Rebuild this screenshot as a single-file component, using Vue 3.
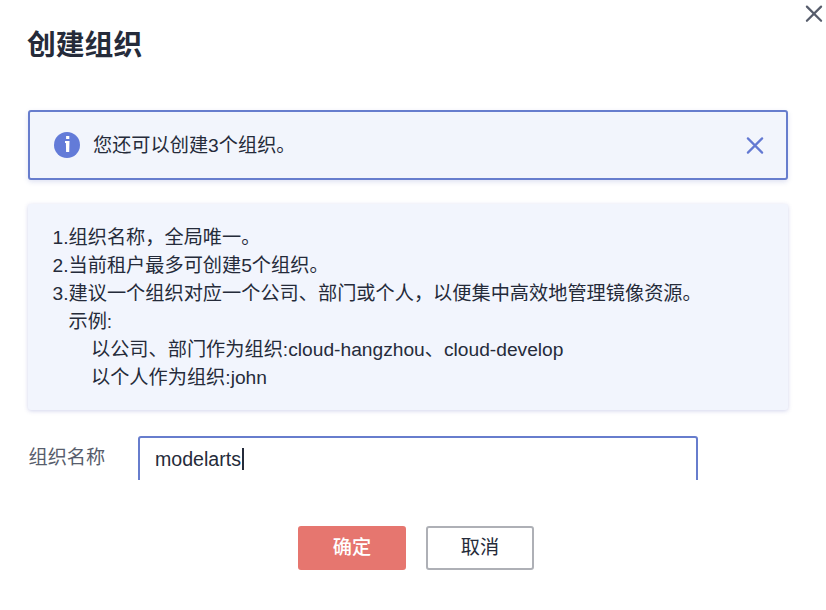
<script setup>
import { ref } from 'vue'

const name = ref('modelarts')
const rules = [
  { text: '1.组织名称，全局唯一。', level: 0 },
  { text: '2.当前租户最多可创建5个组织。', level: 0 },
  { text: '3.建议一个组织对应一个公司、部门或个人，以便集中高效地管理镜像资源。', level: 0 },
  { text: '示例:', level: 1 },
  { text: '以公司、部门作为组织:cloud-hangzhou、cloud-develop', level: 2 },
  { text: '以个人作为组织:john', level: 2 },
]
</script>

<template>
  <main class="dialog">
    <header class="head">
      <h1 class="title">创建组织</h1>
      <button class="close" aria-label="关闭">
        <svg width="18" height="18" viewBox="0 0 18 18"><path d="M1.9 1.6L16.1 15.8M16.1 1.6L1.9 15.8" /></svg>
      </button>
    </header>

    <section class="alert">
      <svg class="info" width="26" height="26" viewBox="0 0 26 26">
        <circle cx="13" cy="13" r="13" />
        <path d="M12.1 4.1h3.2v2.8h-3.2zM11 9h4.5l-.3 11h-3.1l-.2-9H11z" />
      </svg>
      <span class="alert-text">您还可以创建3个组织。</span>
      <button class="dismiss" aria-label="关闭提示">
        <svg width="18" height="18" viewBox="0 0 18 18"><path d="M1.9 2.4L16.1 16.6M16.1 2.4L1.9 16.6" /></svg>
      </button>
    </section>

    <section class="notes">
      <p v-for="rule in rules" :key="rule.text" class="note" :class="'level-' + rule.level">{{ rule.text }}</p>
    </section>

    <section class="field">
      <span class="label">组织名称</span>
      <div class="input"><span>{{ name }}</span><i class="caret"></i></div>
    </section>

    <footer class="actions">
      <button class="btn primary">确定</button>
      <button class="btn">取消</button>
    </footer>
  </main>
</template>

<style>
body {
  margin: 0;
  background: #fff;
}
</style>

<style scoped>
.dialog {
  box-sizing: border-box;
  width: 826px;
  height: 610px;
  overflow: hidden;
  background: #fff;
  color: #252b3a;
  font-family: "Liberation Sans", "Noto Sans CJK SC", sans-serif;
  font-size: 19.2px;
}
button {
  padding: 0;
  border: 0;
  background: none;
  font-family: inherit;
  font-size: inherit;
  color: inherit;
}
.head {
  display: flex;
  justify-content: space-between;
  align-items: flex-start;
  height: 110px;
  padding: 0 3px 0 27px;
  box-sizing: border-box;
}
.title {
  margin: 25px 0 0;
  font-size: 28.8px;
  line-height: 41px;
  font-weight: 700;
}
.close,
.dismiss {
  display: flex;
}
.close {
  margin-top: 5px;
}
.close path,
.dismiss path {
  fill: none;
  stroke: #575d6c;
  stroke-width: 2.2;
  stroke-linecap: round;
}
.dismiss path {
  stroke: #6379d2;
}
.alert {
  box-sizing: border-box;
  display: flex;
  align-items: center;
  width: 760px;
  height: 70px;
  margin-left: 28px;
  padding: 0 22px 0 24px;
  border: 2px solid #677dcd;
  border-radius: 3px;
  background: #f2f5fc;
  box-shadow: 0 2px 5px rgba(94, 110, 190, 0.2);
}
.info circle {
  fill: #637bd8;
}
.info path {
  fill: #fff;
}
.alert-text {
  flex: 1;
  margin-left: 13px;
  padding-top: 2px;
  line-height: 28px;
}
.notes {
  box-sizing: border-box;
  width: 760px;
  height: 206px;
  margin: 24px 0 0 28px;
  padding: 20px 24px;
  border-radius: 3px;
  background: #f2f5fd;
  box-shadow: 0 1px 4px rgba(80, 90, 180, 0.26);
}
.note {
  margin: 0;
  padding-left: 0.5px;
  line-height: 28px;
  white-space: nowrap;
}
.level-1 {
  padding-left: 16.5px;
}
.level-2 {
  padding-left: 39px;
}
.field {
  display: flex;
  align-items: flex-start;
  height: 44px;
  margin: 26px 0 0 28px;
  overflow: hidden;
}
.label {
  box-sizing: border-box;
  width: 110px;
  padding: 8px 0 0 0.5px;
  line-height: 28px;
  color: #575d6c;
}
.input {
  box-sizing: border-box;
  display: flex;
  align-items: center;
  width: 560px;
  height: 48px;
  flex: none;
  padding: 0 15px 2px;
  border: 2px solid #677dcd;
  border-radius: 3px;
  font-size: 19.6px;
}
.caret {
  width: 2px;
  height: 22px;
  margin-left: 1px;
  background: #252b3a;
}
.actions {
  display: flex;
  justify-content: center;
  gap: 20px;
  margin-top: 46px;
  padding-left: 6px;
}
.btn {
  box-sizing: border-box;
  width: 108px;
  height: 44px;
  border: 2px solid #aeb0b6;
  border-radius: 3px;
  line-height: 40px;
}
.primary {
  border-color: #e6766f;
  background: #e6766f;
  color: #fff;
  font-weight: 500;
}
</style>
